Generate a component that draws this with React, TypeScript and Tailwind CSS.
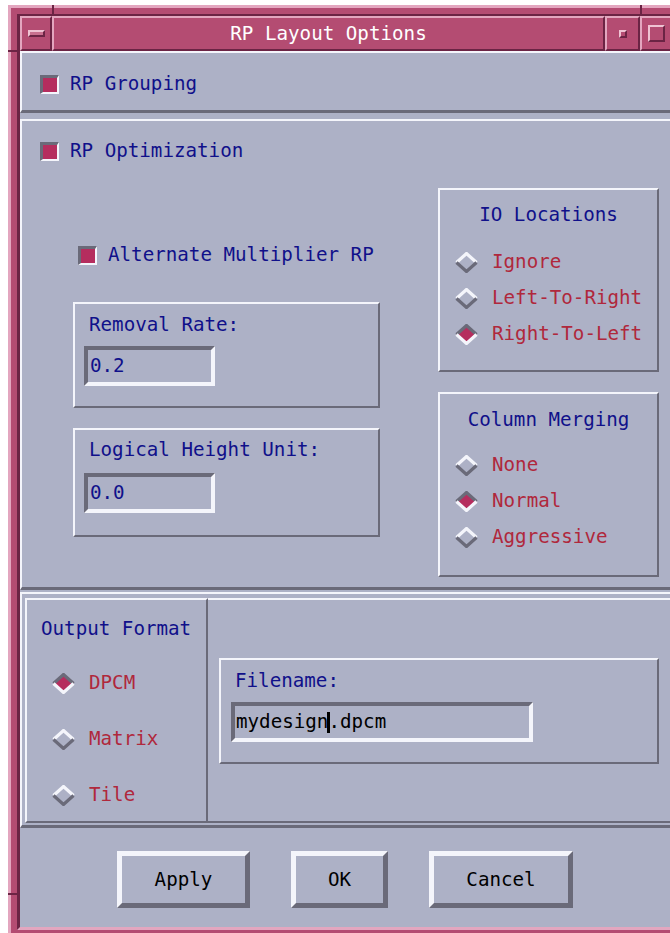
import React from 'react'

// Motif-style shadow bevels
const raised =
  'border-2 border-t-[#f4f5fb] border-l-[#f4f5fb] border-b-[#6a6a79] border-r-[#6a6a79]'
const panel =
  'border-t-2 border-l-2 border-r-2 border-b-[3px] border-t-[#f4f5fb] border-l-[#f4f5fb] border-b-[#6a6a79] border-r-[#6a6a79]'
const sunken =
  'border-4 border-t-[#6a6a79] border-l-[#6a6a79] border-b-[#f4f5fb] border-r-[#f4f5fb]'
const pinkRaised =
  'border-t-2 border-l-2 border-r-2 border-b-2 border-t-[#e3a6bf] border-l-[#e3a6bf] border-r-[#6b2444] border-b-[#6b2444]'

function Check() {
  return (
    <span className="block w-[19px] h-[19px] shrink-0 bg-[#b52d5e] border-t-[3px] border-l-[3px] border-b-2 border-r-2 border-t-[#6a6a79] border-l-[#6a6a79] border-b-[#f4f5fb] border-r-[#f4f5fb]" />
  )
}

function Diamond({ on }: { on?: boolean }) {
  const light = '#f4f5fb'
  const dark = '#6a6a79'
  return (
    <svg width="23" height="21" viewBox="0 0 23 21" className="shrink-0">
      <polygon points="1.5,10.5 11.5,1.5 21.5,10.5 11.5,19.5" fill={on ? '#b52d5e' : 'none'} />
      <path d="M1.5 10.5 L11.5 1.5 L21.5 10.5" fill="none" stroke={on ? dark : light} strokeWidth="3.2" />
      <path d="M1.5 10.5 L11.5 19.5 L21.5 10.5" fill="none" stroke={on ? light : dark} strokeWidth="3.2" />
    </svg>
  )
}

function Radio({ label, on, h }: { label: string; on?: boolean; h: string }) {
  return (
    <div className={`flex items-center gap-[14px] ${h}`}>
      <Diamond on={on} />
      <span className="text-[#b0283c]">{label}</span>
    </div>
  )
}

function Field({ value, width }: { value: string; width: string }) {
  return (
    <div className={`h-[40px] ${width} ${sunken} flex items-center pl-[2px] text-[#10108a]`}>{value}</div>
  )
}

function Button({ label, width }: { label: string; width: string }) {
  return (
    <div
      className={`h-[57px] ${width} flex items-center justify-center text-black border-[5px] border-t-[#f4f5fb] border-l-[#f4f5fb] border-b-[#6a6a79] border-r-[#6a6a79]`}
    >
      {label}
    </div>
  )
}

function TitleBar() {
  return (
    <div className="flex h-[35px] bg-[#b44c72]">
      <div className={`w-[32px] flex items-center justify-center ${pinkRaised}`}>
        <span className="block w-[17px] h-[7px] bg-[#c9708f] border-t-2 border-l-2 border-b-2 border-r-2 border-t-[#efc3d3] border-l-[#efc3d3] border-b-[#6b2444] border-r-[#6b2444]" />
      </div>
      <div className={`flex-1 flex items-center justify-center text-white ${pinkRaised}`}>
        RP Layout Options
      </div>
      <div className={`w-[35px] flex items-center justify-center ${pinkRaised}`}>
        <span className="block w-[8px] h-[8px] border-t-2 border-l-2 border-b-2 border-r-2 border-t-[#efc3d3] border-l-[#efc3d3] border-b-[#6b2444] border-r-[#6b2444]" />
      </div>
      <div className={`w-[37px] flex items-center pl-[6px] ${pinkRaised}`}>
        <span className="block w-[17px] h-[17px] border-t-2 border-l-2 border-b-2 border-r-2 border-t-[#efc3d3] border-l-[#efc3d3] border-b-[#6b2444] border-r-[#6b2444]" />
      </div>
    </div>
  )
}

export default function App() {
  return (
    <div className="w-[670px] h-[933px] overflow-hidden bg-white font-['DejaVu_Sans_Mono',monospace] text-[19.2px] leading-[22px]">
      <div className="relative ml-[8px] mt-[5px] w-[678px] border-l-[3px] border-t-[3px] border-[#e3a6bf] bg-[#b44c72] pl-[6px] pt-[6px] pr-[6px] pb-[10px]">
        {/* frame corner notches */}
        <span className="absolute left-[41px] top-[-3px] w-[2px] h-[11px] bg-[#6b2444]" />
        <span className="absolute left-[629px] top-[-3px] w-[2px] h-[11px] bg-[#6b2444]" />
        <span className="absolute left-[-3px] top-[42px] w-[12px] h-[2px] bg-[#6b2444]" />
        <span className="absolute left-[-3px] top-[885px] w-[12px] h-[2px] bg-[#6b2444]" />

        <div className="border-l-[3px] border-t-2 border-r-[3px] border-b-[3px] border-l-[#6b2444] border-t-[#6b2444] border-r-[#e3a6bf] border-b-[#e3a6bf]">
          <TitleBar />

          <div className="h-[876px] flex flex-col bg-[#adb1c6] text-[#10108a]">
            {/* RP Grouping */}
            <div className={`h-[62px] ${panel} pt-[20px] pl-[18px]`}>
              <div className="flex items-center gap-[11px]">
                <Check />
                <span>RP Grouping</span>
              </div>
            </div>

            {/* RP Optimization */}
            <div className={`mt-[6px] h-[471px] ${panel} pt-[19px] pl-[18px]`}>
              <div className="flex items-center gap-[11px]">
                <Check />
                <span>RP Optimization</span>
              </div>

              <div className="flex items-start">
                <div className="ml-[33px] w-[307px] flex flex-col">
                  <div className="mt-[82px] ml-[5px] flex items-center gap-[11px]">
                    <Check />
                    <span>Alternate Multiplier RP</span>
                  </div>

                  <div className={`mt-[36px] h-[106px] ${raised} pt-[10px] pl-[14px]`}>
                    <div>Removal Rate:</div>
                    <div className="mt-[10px] -ml-[5px]">
                      <Field value="0.2" width="w-[131px]" />
                    </div>
                  </div>

                  <div className={`mt-[20px] h-[109px] ${raised} pt-[9px] pl-[14px]`}>
                    <div>Logical Height Unit:</div>
                    <div className="mt-[12px] -ml-[5px]">
                      <Field value="0.0" width="w-[131px]" />
                    </div>
                  </div>
                </div>

                <div className="ml-[58px] mt-[26px] w-[221px] flex flex-col">
                  <div className={`h-[184px] ${raised} pt-[14px] pl-[15px]`}>
                    <div className="text-center -ml-[15px]">IO Locations</div>
                    <div className="mt-[18px]">
                      <Radio label="Ignore" h="h-[36px]" />
                      <Radio label="Left-To-Right" h="h-[36px]" />
                      <Radio label="Right-To-Left" on h="h-[36px]" />
                    </div>
                  </div>

                  <div className={`mt-[20px] h-[185px] ${raised} pt-[15px] pl-[15px]`}>
                    <div className="text-center -ml-[15px]">Column Merging</div>
                    <div className="mt-[16px]">
                      <Radio label="None" h="h-[36px]" />
                      <Radio label="Normal" on h="h-[36px]" />
                      <Radio label="Aggressive" h="h-[36px]" />
                    </div>
                  </div>
                </div>
              </div>
            </div>

            {/* Output format + filename */}
            <div className={`mt-[2px] h-[236px] ${panel} pt-[4px] pl-[3px] flex`}>
              <div className={`w-[183px] h-[225px] ${raised} pt-[18px] pl-[14px]`}>
                <div>Output Format</div>
                <div className="mt-[15px] ml-[11px]">
                  <Radio label="DPCM" on h="h-[56px]" />
                  <Radio label="Matrix" h="h-[56px]" />
                  <Radio label="Tile" h="h-[56px]" />
                </div>
              </div>

              <div className="flex-1 h-[225px] border-t-2 border-b-2 border-t-[#f4f5fb] border-b-[#6a6a79] pt-[58px] pl-[11px]">
                <div className={`w-[440px] h-[106px] ${raised} pt-[10px] pl-[14px]`}>
                  <div>Filename:</div>
                  <div className="mt-[10px] -ml-[4px]">
                    <div className={`h-[40px] w-[302px] ${sunken} flex items-center pl-[1px] text-black`}>
                      <span className="relative">
                        mydesign
                        <span className="absolute right-[-2px] top-[1px] w-[3px] h-[21px] bg-black" />
                      </span>
                      <span>.dpcm</span>
                    </div>
                  </div>
                </div>
              </div>
            </div>

            {/* dialog buttons */}
            <div className="flex-1 flex items-start pt-[23px] pl-[97px] gap-[41px]">
              <Button label="Apply" width="w-[133px]" />
              <Button label="OK" width="w-[97px]" />
              <Button label="Cancel" width="w-[144px]" />
            </div>
          </div>
        </div>
      </div>
    </div>
  )
}
